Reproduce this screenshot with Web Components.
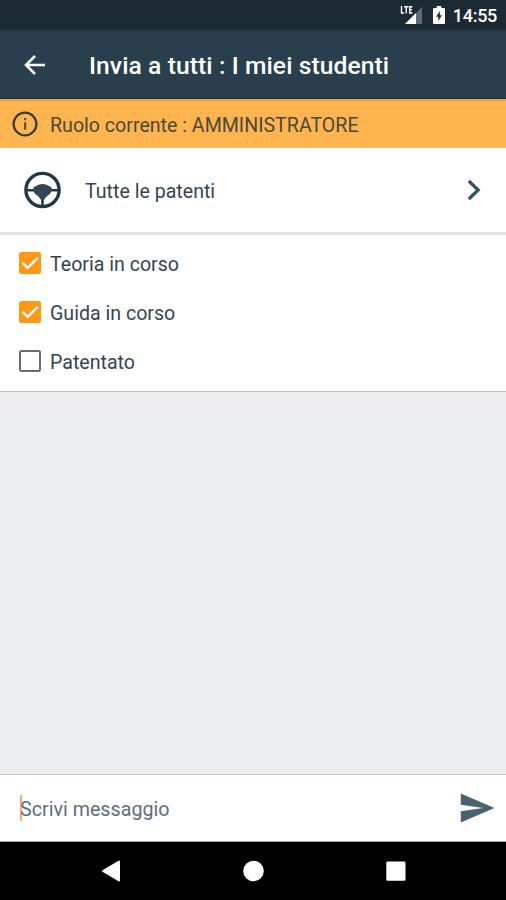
<!DOCTYPE html>
<html lang="it">
<head>
<meta charset="utf-8">
<title>Invia a tutti</title>
<style>
html,body{margin:0;padding:0}
body{width:506px;height:900px;overflow:hidden;font-family:Roboto,"Liberation Sans",sans-serif;color:#334650}
</style>
</head>
<body>
<message-screen></message-screen>
<script>
const define = (name, html) => customElements.define(name, class extends HTMLElement {
  constructor() {
    super();
    this.attachShadow({mode: "open"}).innerHTML = html;
  }
});

define("status-bar", `
<style>
:host{display:flex;height:30px;box-sizing:border-box;background:#1c2a33;color:#fff;align-items:center;padding:2px 9px 0 0;justify-content:flex-end}
svg{display:block}
.sig{margin:-2px 10px 0 0}.bat{margin:-2px 8px 0 0}
span{font-size:18px;font-weight:500;line-height:28px;letter-spacing:-.3px}
</style>
<svg class="sig" width="23" height="20" viewBox="0 0 23 20">
<path d="M22 2V19H5Z" fill="#5f6a71"/><path d="M16 8V19H5Z" fill="#fff"/>
<path d="M0 0H13V9H0Z" fill="#1c2a33"/>
<path d="M1.500 1V8H4M4 1.700H8.400M6.200 1.700V8.600M12.400 1.700H9.700V8H12.400M9.700 4.800H12" fill="none" stroke="#fff" stroke-width="1.400"/>
</svg>
<svg class="bat" width="12" height="18" viewBox="0 0 12 18"><path d="M1 2H3.7V0H8.3V2H11Q12 2 12 3V17Q12 18 11 18H1Q0 18 0 17V3Q0 2 1 2Z" fill="#fff"/><path d="M6.8 5L3 10.7H5.3V15L9 9.3H6.8Z" fill="#1c2a33"/></svg>
<span>14:55</span>`);

define("top-bar", `
<style>
:host{display:flex;height:69px;box-sizing:border-box;background:#293f4d;color:#fff;align-items:center;padding:1px 0 0 21px;border-top:1px solid #25353f;border-bottom:1px solid #17303f}
svg{display:block;margin:-1px 40px 0 0}
h1{margin:0;padding-top:2px;font-size:24.6px;font-weight:500;line-height:30px;white-space:nowrap;letter-spacing:.1px}
</style>
<svg width="28" height="28" viewBox="0 0 28 28"><path d="M14 5L5 14L14 23M5.4 14H24" fill="none" stroke="#fff" stroke-width="2.5"/></svg>
<h1><slot></slot></h1>`);

define("role-banner", `
<style>
:host{display:flex;height:49px;box-sizing:border-box;background:linear-gradient(#e2a34c,#feb54f 4px);align-items:center;padding:2px 0 0 12px;font-size:19.6px;color:#4b4938}
svg{display:block;margin:-1px 12px 0 0}
span{line-height:24px;padding-top:2px;white-space:nowrap}
</style>
<svg width="26" height="26" viewBox="0 0 26 26"><circle cx="13" cy="13" r="11.4" fill="none" stroke="#363d38" stroke-width="2.2"/><path d="M12 7H14.2V9.2H12ZM12 11.3H14.2V18.8H12Z" fill="#5b5137"/></svg>
<span><slot></slot></span>`);

define("licence-row", `
<style>
:host{display:flex;height:87px;box-sizing:border-box;background:#fff;align-items:center;padding:0 24px;border-bottom:3px solid #e1e4e5}
svg{display:block;flex:none}
span{flex:1;margin-left:23px;font-size:19.6px;line-height:24px;padding-top:3px}
</style>
<svg width="38" height="38" viewBox="0 0 38 38"><circle cx="18.5" cy="19" r="16.6" fill="none" stroke="#233844" stroke-width="3.4"/><path d="M2 19.2H10M27 19.2H35M18.5 26V35" stroke="#233844" stroke-width="2.6"/><path d="M9 18Q9.500 15.500 12 15Q15 13 18.500 13Q22 13 25 15Q27.500 15.500 28 18Q27.500 22.500 24 24.300Q21.500 26 20.500 28.500H16.500Q15.500 26 13 24.300Q9.500 22.500 9 18Z" fill="#344650"/></svg>
<span><slot></slot></span>
<svg width="16" height="22" viewBox="0 0 16 22"><path d="M2.800 2L12.200 11L2.800 20" fill="none" stroke="#315261" stroke-width="3.200"/></svg>`);

define("check-item", `
<style>
:host{display:flex;height:49.2px;align-items:center;font-size:19.6px}
i{display:block;width:22px;height:22px;margin:-1px 9px 0 0;box-sizing:border-box;border:2px solid #6c6c6c;border-radius:2.500px}
svg{display:none}
:host([checked]) i{background:#ff9813;border:0}
:host([checked]) svg{display:block}
span{line-height:24px;padding-top:3px;white-space:nowrap}
</style>
<i><svg width="22" height="22" viewBox="0 0 22 22"><path d="M3.500 10.800L8.700 15.800L18.800 5.800" fill="none" stroke="#fff" stroke-width="2.500"/></svg></i><span><slot></slot></span>`);

define("filter-list", `
<style>:host{display:block;height:157px;box-sizing:border-box;background:#fff;padding:4px 0 0 19px;border-bottom:1px solid #b2c3c6}</style><slot></slot>`);

define("message-bar", `
<style>
:host{display:flex;height:68px;box-sizing:border-box;background:#fff;border-top:1px solid #b7c8cc;border-bottom:1px solid #aaa;align-items:center;padding:0 11px 0 20px}
b{width:2px;height:26px;background:#ffac6b;margin-right:-2px}
span{flex:1;font-size:19.7px;line-height:24px;padding-top:3px;color:#5b707b}
svg{display:block}
</style>
<b></b><span><slot></slot></span>
<svg width="35" height="30" viewBox="0 0 35 30"><path d="M.800 .500L34.500 15L.800 29.500V18.300L23 15L.800 11.700Z" fill="#496470"/></svg>`);

define("nav-bar", `
<style>
:host{display:flex;height:58px;background:#000;align-items:center;justify-content:space-between;padding:0 100px 0 101px;box-sizing:border-box}
svg{display:block}
</style>
<svg width="20" height="22" viewBox="0 0 20 22"><path d="M18 1.500V20.500L2 11Z" fill="#fff" stroke="#fff" stroke-width="2" stroke-linejoin="round"/></svg>
<svg width="22" height="22" viewBox="0 0 22 22"><circle cx="10.500" cy="11" r="10.300" fill="#fff"/></svg>
<svg width="20" height="20" viewBox="0 0 20 20"><rect x=".300" y=".600" width="19.200" height="19.200" rx="1.300" fill="#fff"/></svg>`);

define("message-screen", `
<style>
:host{display:flex;flex-direction:column;width:506px;height:900px;background:#ecedef}
main{flex:1}
</style>
<status-bar></status-bar>
<top-bar>Invia a tutti : I miei studenti</top-bar>
<role-banner>Ruolo corrente : AMMINISTRATORE</role-banner>
<licence-row>Tutte le patenti</licence-row>
<filter-list>
<check-item checked>Teoria in corso</check-item>
<check-item checked>Guida in corso</check-item>
<check-item>Patentato</check-item>
</filter-list>
<main></main>
<message-bar>Scrivi messaggio</message-bar>
<nav-bar></nav-bar>`);
</script>
</body>
</html>
